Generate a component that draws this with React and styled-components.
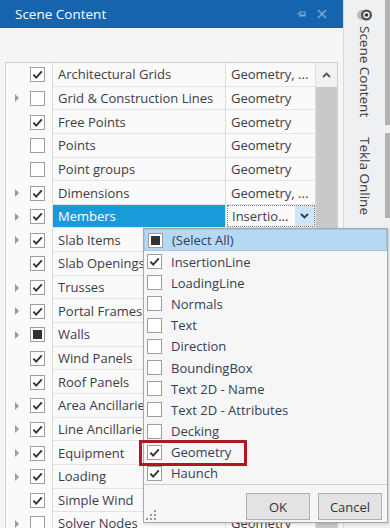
import styled, { createGlobalStyle } from 'styled-components'

const GlobalStyle = createGlobalStyle`
  html, body {
    margin: 0;
    padding: 0;
    background: #f4f5f7;
  }
  * {
    box-sizing: border-box;
  }
`

// rows hidden behind the dropdown keep an empty value cell
const rows = [
  { name: 'Architectural Grids', value: 'Geometry, ...', check: 'on' },
  { name: 'Grid & Construction Lines', value: 'Geometry', check: 'off', arrow: true },
  { name: 'Free Points', value: 'Geometry', check: 'on' },
  { name: 'Points', value: 'Geometry', check: 'off' },
  { name: 'Point groups', value: 'Geometry', check: 'off' },
  { name: 'Dimensions', value: 'Geometry, ...', check: 'on', arrow: true },
  { name: 'Members', combo: 'Insertio...', check: 'on', arrow: true, selected: true },
  { name: 'Slab Items', value: '', check: 'on', arrow: true },
  { name: 'Slab Openings', value: '', check: 'on' },
  { name: 'Trusses', value: '', check: 'on', arrow: true },
  { name: 'Portal Frames', value: '', check: 'on', arrow: true },
  { name: 'Walls', value: '', check: 'mixed', arrow: true },
  { name: 'Wind Panels', value: '', check: 'on' },
  { name: 'Roof Panels', value: '', check: 'on' },
  { name: 'Area Ancillaries', value: '', check: 'on', arrow: true },
  { name: 'Line Ancillaries', value: '', check: 'on', arrow: true },
  { name: 'Equipment', value: '', check: 'on', arrow: true },
  { name: 'Loading', value: '', check: 'on', arrow: true },
  { name: 'Simple Wind', value: '', check: 'on' },
  { name: 'Solver Nodes', value: 'Geometry', check: 'off', arrow: true },
]

const options = [
  { label: 'InsertionLine', check: 'on' },
  { label: 'LoadingLine', check: 'off' },
  { label: 'Normals', check: 'off' },
  { label: 'Text', check: 'off' },
  { label: 'Direction', check: 'off' },
  { label: 'BoundingBox', check: 'off' },
  { label: 'Text 2D - Name', check: 'off' },
  { label: 'Text 2D - Attributes', check: 'off' },
  { label: 'Decking', check: 'off' },
  { label: 'Geometry', check: 'on', marked: true },
  { label: 'Haunch', check: 'on' },
]

const CheckBox = ({ state }) => (
  <Check>
    {state === 'on' && (
      <svg width='13' height='13' viewBox='0 0 13 13'>
        <path d='M2.4 6.6 L5.2 9.6 L10.8 3.4' fill='none' stroke='#333' strokeWidth='1.9' />
      </svg>
    )}
    {state === 'mixed' && <Square />}
  </Check>
)

const App = () => {
  return (
    <>
      <GlobalStyle />
      <Frame>
        <Panel>
          <TitleBar>
            <span>Scene Content</span>
            <TitleIcons>
              <svg width='9' height='8' viewBox='0 0 9 8'>
                <path d='M0 4h3M3 1v6M3 2h5v4H3M3 5h5' fill='none' stroke='#78a7d6' strokeWidth='1.2' />
              </svg>
              <svg width='10' height='10' viewBox='0 0 10 10'>
                <path d='M1 1L9 9M9 1L1 9' stroke='#78a7d6' strokeWidth='1.6' />
              </svg>
            </TitleIcons>
          </TitleBar>
          <Toolbar />
          <Grid>
            <Rows>
              {rows.map((r) => (
                <Row key={r.name}>
                  <Expander>{r.arrow && <Arrow />}</Expander>
                  <CheckCell>
                    <CheckBox state={r.check} />
                  </CheckCell>
                  <NameCell $selected={r.selected}>{r.name}</NameCell>
                  <ValueCell>
                    {r.combo ? (
                      <Combo>
                        <span>{r.combo}</span>
                        <ComboButton>
                          <svg width='9' height='6' viewBox='0 0 9 6'>
                            <path d='M1 1L4.5 4.5L8 1' fill='none' stroke='#2a3a5a' strokeWidth='1.8' />
                          </svg>
                        </ComboButton>
                      </Combo>
                    ) : (
                      r.value
                    )}
                  </ValueCell>
                </Row>
              ))}
            </Rows>
            <ScrollBar>
              <ScrollUp>
                <svg width='9' height='6' viewBox='0 0 9 6'>
                  <path d='M1 5L4.5 1.5L8 5' fill='none' stroke='#555' strokeWidth='1.8' />
                </svg>
              </ScrollUp>
              <ScrollThumb />
            </ScrollBar>
          </Grid>
        </Panel>
        <SideStrip>
          <SideTab $active>
            <svg width='16' height='14' viewBox='0 0 16 14'>
              <circle cx='5' cy='7' r='5' fill='#b9b9b9' />
              <circle cx='9.5' cy='7' r='5.5' fill='#505050' />
              <circle cx='9.5' cy='7' r='3.2' fill='#f2f2f2' />
              <circle cx='9.5' cy='7' r='1.8' fill='#303030' />
            </svg>
            <TabLabel>Scene Content</TabLabel>
          </SideTab>
          <SideTab>
            <TabLabel>Tekla Online</TabLabel>
          </SideTab>
        </SideStrip>

        <Popup>
          <PopupList>
            <PopupItem $hot>
              <CheckBox state='mixed' />
              <span>(Select All)</span>
            </PopupItem>
            {options.map((o) => (
              <PopupItem key={o.label}>
                <CheckBox state={o.check} />
                <span>{o.label}</span>
                {o.marked && <Marker />}
              </PopupItem>
            ))}
          </PopupList>
          <Footer>
            <Button>OK</Button>
            <Button>Cancel</Button>
          </Footer>
          <Grip>
            <svg width='10' height='10' viewBox='0 0 10 10'>
              <g fill='#9a9a9a'>
                <rect x='8' y='0' width='2' height='2' />
                <rect x='4' y='4' width='2' height='2' />
                <rect x='8' y='4' width='2' height='2' />
                <rect x='0' y='8' width='2' height='2' />
                <rect x='4' y='8' width='2' height='2' />
                <rect x='8' y='8' width='2' height='2' />
              </g>
            </svg>
          </Grip>
        </Popup>
      </Frame>
    </>
  )
}
export default App

const Frame = styled.div`
  position: relative;
  width: 390px;
  height: 528px;
  overflow: hidden;
  display: flex;
  font-family: 'Open Sans', 'Noto Sans', sans-serif;
  font-size: 13px;
  color: #3c3c48;
`

const Panel = styled.div`
  width: 343px;
  display: flex;
  flex-direction: column;
  background: #f4f5f7;
`

const TitleBar = styled.div`
  flex: none;
  height: 28px;
  background: #1664ad;
  color: #ffffff;
  font-size: 13.5px;
  display: flex;
  align-items: center;
  justify-content: space-between;
  padding: 0 16px 0 15px;
`

const TitleIcons = styled.div`
  display: flex;
  align-items: center;
  gap: 11px;
`

const Toolbar = styled.div`
  flex: none;
  height: 34px;
`

const Grid = styled.div`
  flex: none;
  margin-left: 5px;
  width: 333px;
  display: flex;
  border: 1px solid #cfcfcf;
  border-bottom: none;
  background: #fafafa;
`

const Rows = styled.div`
  width: 309px;
`

const Row = styled.div`
  display: grid;
  grid-template-columns: 18px 28px 173px 90px;
  height: 23.65px;
`

const Expander = styled.div`
  display: flex;
  align-items: center;
  padding-left: 9px;
`

const Arrow = styled.div`
  width: 0;
  height: 0;
  border-top: 4px solid transparent;
  border-bottom: 4px solid transparent;
  border-left: 4px solid #9a9a9a;
`

const CheckCell = styled.div`
  display: flex;
  align-items: center;
  padding-left: 6px;
`

const Check = styled.div`
  width: 15px;
  height: 15px;
  flex: none;
  border: 1px solid #9e9e9e;
  background: #ffffff;
  display: flex;
  align-items: center;
  justify-content: center;
`

const Square = styled.div`
  width: 9px;
  height: 9px;
  background: #333333;
`

const NameCell = styled.div`
  display: flex;
  align-items: center;
  padding-left: 5px;
  border-left: 1px solid #dcdcdc;
  border-bottom: 1px solid #e3e3e3;
  white-space: nowrap;
  overflow: hidden;
  background: ${(p) => (p.$selected ? '#1a9bd9' : 'transparent')};
  color: ${(p) => (p.$selected ? '#ffffff' : 'inherit')};
`

const ValueCell = styled.div`
  display: flex;
  align-items: center;
  padding-left: 5px;
  border-left: 1px solid #dcdcdc;
  border-bottom: 1px solid #e3e3e3;
  white-space: nowrap;
  overflow: hidden;
`

const Combo = styled.div`
  margin-left: -4px;
  width: 89px;
  height: 22px;
  display: flex;
  align-items: center;
  justify-content: space-between;
  border: 1px dotted #7a7a7a;
  background: #fafafa;
  padding-left: 4px;
`

const ComboButton = styled.div`
  width: 19px;
  height: 100%;
  background: #cce5f8;
  display: flex;
  align-items: center;
  justify-content: center;
`

const ScrollBar = styled.div`
  width: 22px;
  display: flex;
  flex-direction: column;
  border-left: 1px solid #dedede;
`

const ScrollUp = styled.div`
  height: 24px;
  background: #f2f2f2;
  display: flex;
  align-items: center;
  justify-content: center;
`

const ScrollThumb = styled.div`
  flex: 1;
  background: #c9c9c9;
`

const SideStrip = styled.div`
  width: 47px;
  display: flex;
  flex-direction: column;
  gap: 8px;
  background: #eff0f2;
  border-left: 1px solid #dadada;
`

const SideTab = styled.div`
  flex: none;
  display: flex;
  flex-direction: column;
  align-items: center;
  gap: 4px;
  padding: ${(p) => (p.$active ? '8px 0 6px 0' : '4px 0 6px 0')};
  height: ${(p) => (p.$active ? '125px' : '85px')};
  border-right: 5px solid #b2b2b2;
`

const TabLabel = styled.span`
  writing-mode: vertical-rl;
  white-space: nowrap;
  font-size: 13.5px;
  color: #3a3a3a;
`

const Popup = styled.div`
  position: absolute;
  left: 143px;
  top: 228px;
  width: 245px;
  height: 295px;
  background: #f6f6f6;
  border: 1px solid #a8a8a8;
  box-shadow: 1px 1px 3px rgba(0, 0, 0, 0.15);
  display: flex;
  flex-direction: column;
  color: #343e58;
`

const PopupList = styled.div`
  display: flex;
  flex-direction: column;
  border-bottom: 1px solid #cdcdcd;
`

const PopupItem = styled.div`
  position: relative;
  height: ${(p) => (p.$hot ? '22px' : '21.2px')};
  display: flex;
  align-items: center;
  gap: 9px;
  padding-left: 3px;
  background: ${(p) => (p.$hot ? '#b7d8f2' : 'transparent')};
  border: ${(p) => (p.$hot ? '1px solid #9fc7e8' : 'none')};
  font-size: 13px;
`

const Marker = styled.div`
  position: absolute;
  left: -5px;
  top: -2px;
  width: 108px;
  height: 26px;
  border: 3px solid #b01820;
`

const Footer = styled.div`
  display: flex;
  justify-content: flex-end;
  gap: 8px;
  padding: 8px 5px 0 0;
`

const Button = styled.div`
  width: 64px;
  height: 27px;
  display: flex;
  align-items: center;
  justify-content: center;
  background: #e3e3e3;
  border: 1px solid #b0b0b0;
  font-size: 13px;
  color: #333333;
`

const Grip = styled.div`
  position: absolute;
  left: 2px;
  bottom: 2px;
  line-height: 0;
`
